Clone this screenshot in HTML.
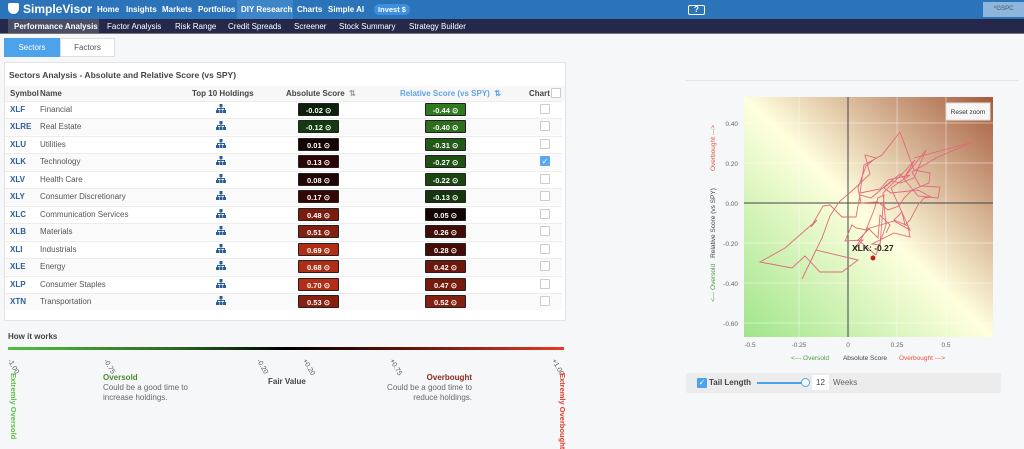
<!DOCTYPE html>
<html><head><meta charset="utf-8"><style>
*{box-sizing:border-box;margin:0;padding:0}
body{width:1024px;height:431px;overflow:hidden;background:#f6f7f9;font-family:"Liberation Sans",sans-serif;font-size:8px;color:#444;position:relative}
.top{position:absolute;left:0;top:0;width:1024px;height:19px;background:#2b74ba}
.top .logo{position:absolute;left:8px;top:2px;color:#fff;font-size:12px;font-weight:bold}
.top .nav{position:absolute;top:5px;color:#fff;font-weight:bold;font-size:8px}
.sub{position:absolute;left:0;top:19px;width:1024px;height:15px;background:#25284a;border-bottom:1px solid #777}
.sub span{position:absolute;top:3px;color:#fff;font-size:8px}
.abs{position:absolute}
.card{position:absolute;left:4px;top:62px;width:562px;height:259px;background:#fff;border:1px solid #e3e3e3}
.row{position:absolute;left:5px;width:557px;height:17px;border-top:1px solid #ececec}
.sym{position:absolute;left:10px;color:#2b5d9c;font-weight:bold}
.nm{position:absolute;left:40px;color:#555}
.box{position:absolute;width:41px;height:13px;color:#fff;font-weight:bold;font-size:7.5px;text-align:center;line-height:13px;border-radius:1px;border:1px solid #222}
.cb{position:absolute;left:540px;width:10px;height:10px;border:1px solid #ccc;background:#fff;border-radius:1px}
.ico{position:absolute;left:216px;width:10px;height:9px}
.rl{position:absolute;top:358px;font-size:7px;transform:rotate(60deg);transform-origin:left top;color:#555}
</style></head><body>
<div class="top">
 <div class="logo"><span style="display:inline-block;width:11px;height:11px;background:#fff;border-radius:2px 2px 6px 6px;vertical-align:-1px;margin-right:4px"></span>SimpleVisor</div>
 <div class="nav" style="left:97px">Home</div>
 <div class="nav" style="left:126px">Insights</div>
 <div class="nav" style="left:162px">Markets</div>
 <div class="nav" style="left:198px">Portfolios</div>
 <div class="abs" style="left:237px;top:0;width:56px;height:19px;background:#3f86c9"></div>
 <div class="nav" style="left:241px">DIY Research</div>
 <div class="nav" style="left:297px">Charts</div>
 <div class="nav" style="left:328px">Simple AI</div>
 <div class="abs" style="left:374px;top:4px;width:36px;height:11px;background:#3d8fe0;border-radius:6px;color:#fff;font-weight:bold;font-size:7.5px;text-align:center;line-height:11px">Invest $</div>
 <div class="abs" style="left:688px;top:5px;width:17px;height:10px;border:1.5px solid #fff;border-radius:2px;color:#fff;font-size:8px;line-height:8px;text-align:center;font-weight:bold">?</div>
 <div class="abs" style="left:983px;top:2px;width:41px;height:15px;background:#8eb6dc;color:#456;font-size:6px;text-align:center;line-height:15px">^GSPC</div>
</div>
<div class="sub">
 <div class="abs" style="left:8px;top:0;width:91px;height:14px;background:#4a4d66"></div>
 <span style="left:14px;font-weight:bold">Performance Analysis</span>
 <span style="left:107px">Factor Analysis</span>
 <span style="left:175px">Risk Range</span>
 <span style="left:228px">Credit Spreads</span>
 <span style="left:294px">Screener</span>
 <span style="left:339px">Stock Summary</span>
 <span style="left:409px">Strategy Builder</span>
</div>
<div class="abs" style="left:4px;top:38px;width:56px;height:19px;background:#4ca3ec;color:#fff;text-align:center;line-height:19px">Sectors</div>
<div class="abs" style="left:60px;top:38px;width:55px;height:19px;background:#fff;border:1px solid #ddd;text-align:center;line-height:17px;color:#555">Factors</div>
<div class="card">
 <div class="abs" style="left:4px;top:7px;font-weight:bold;font-size:8.5px;color:#444">Sectors Analysis - Absolute and Relative Score (vs SPY)</div>
</div>
<div class="abs" style="left:5px;top:86px;width:560px;height:15px;background:#f7f7f7"></div>
<div class="abs" style="left:10px;top:89px;font-weight:bold;color:#444">Symbol</div>
<div class="abs" style="left:40px;top:89px;font-weight:bold;color:#444">Name</div>
<div class="abs" style="left:192px;top:89px;font-weight:bold;color:#444">Top 10 Holdings</div>
<div class="abs" style="left:286px;top:89px;font-weight:bold;color:#444">Absolute Score &nbsp;<span style="color:#999">⇅</span></div>
<div class="abs" style="left:400px;top:89px;font-weight:bold;color:#5fa3e8">Relative Score (vs SPY) &nbsp;⇅</div>
<div class="abs" style="left:529px;top:89px;font-weight:bold;color:#444">Chart</div>
<div class="cb" style="left:551px;top:88px"></div>
<div id="rows"></div>
<div class="abs" style="left:8px;top:332px;font-weight:bold;color:#444">How it works</div>
<div class="abs" style="left:8px;top:347px;width:556px;height:3px;background:linear-gradient(90deg,#55c040,#2a6a20 30%,#000 50%,#5a1208 70%,#e53a25)"></div>
<div class="rl" style="left:12px">-1.00</div>
<div class="rl" style="left:108px">-0.75</div>
<div class="rl" style="left:261px">-0.20</div>
<div class="rl" style="left:307px">+0.20</div>
<div class="rl" style="left:394px">+0.75</div>
<div class="rl" style="left:556px">+1.00</div>
<div class="abs" style="left:18px;top:373px;font-size:7.5px;font-weight:bold;color:#55c040;transform:rotate(90deg);transform-origin:left top;white-space:nowrap">Extremly Oversold</div>
<div class="abs" style="left:567px;top:373px;font-size:7.5px;font-weight:bold;color:#e53a25;transform:rotate(90deg);transform-origin:left top;white-space:nowrap">Extremly Overbought</div>
<div class="abs" style="left:103px;top:373px;font-weight:bold;color:#4a8a30">Oversold</div>
<div class="abs" style="left:103px;top:383px;color:#666;line-height:10px">Could be a good time to<br>increase holdings.</div>
<div class="abs" style="left:268px;top:377px;font-weight:bold;color:#444">Fair Value</div>
<div class="abs" style="left:352px;top:373px;width:120px;text-align:right;font-weight:bold;color:#8a2a20">Overbought</div>
<div class="abs" style="left:352px;top:383px;width:120px;text-align:right;color:#666;line-height:10px">Could be a good time to<br>reduce holdings.</div>

<div class="abs" style="left:685px;top:80px;width:334px;height:1px;background:#e6e6e6"></div>
<svg class="abs" style="left:680px;top:80px" width="344" height="300">
 <defs><linearGradient id="g" x1="0" y1="1" x2="1" y2="0">
  <stop offset="0" stop-color="#9fe58a"/><stop offset="0.5" stop-color="#ffffde"/><stop offset="1" stop-color="#a55a3c"/></linearGradient></defs>
 <rect x="64" y="17" width="249" height="240" fill="url(#g)"/>
 <g stroke="#fff" stroke-opacity="0.6" stroke-width="0.7">
  <line x1="119" y1="17" x2="119" y2="257"/><line x1="217" y1="17" x2="217" y2="257"/><line x1="266" y1="17" x2="266" y2="257"/>
  <line x1="64" y1="43" x2="313" y2="43"/><line x1="64" y1="83" x2="313" y2="83"/><line x1="64" y1="163" x2="313" y2="163"/><line x1="64" y1="203" x2="313" y2="203"/><line x1="64" y1="243" x2="313" y2="243"/></g>
 <line x1="168" y1="17" x2="168" y2="257" stroke="#444" stroke-width="1"/>
 <line x1="64" y1="123" x2="313" y2="123" stroke="#444" stroke-width="1"/>
 <polyline fill="none" stroke="#e06a7c" stroke-width="0.9" points="206,153 210,145 200,135 198,158 188,148 174,170 183,160 165,161 172,145 176,148 186,150 194,130 198,118 204,115 200,165 192,164 214,153 230,157 228,146 214,140 222,132 225,145 230,140 238,125 244,118 251,117 238,110 211,113 204,108 212,101 220,103 234,98 246,70 224,98 235,80 223,93 203,113 206,145 196,175 178,160 190,148 214,141 230,150 211,108 230,95 208,100 200,109 180,113 184,85 202,75 220,52 234,90 250,93 249,103 232,110 224,118 219,126 208,130 198,122 181,123 178,108 186,86 196,78 185,75 190,94 173,110 159,122 150,136 142,158 122,199 136,170 178,180 162,192 140,192 125,176 112,188 80,182 105,168 137,140 131,147 143,126 150,125 162,137 176,137 180,115 191,118 204,107 220,94 238,116 258,118 260,107 240,106 232,92 258,77 293,62 256,72 234,78"/>
 <circle cx="193" cy="178" r="2.5" fill="#c0201a"/>
 <text x="172" y="171" font-size="8.5" font-weight="bold" fill="#222" font-family="Liberation Sans">XLK: -0.27</text>
 <rect x="266" y="23" width="44" height="17" fill="#f7f7f7" stroke="#ddd"/>
 <text x="288" y="34" font-size="6.5" text-anchor="middle" fill="#333" font-family="Liberation Sans">Reset zoom</text>
 <g font-size="6.5" fill="#666" font-family="Liberation Sans" text-anchor="end">
  <text x="58" y="46">0.40</text><text x="58" y="86">0.20</text><text x="58" y="126">0.00</text><text x="58" y="166">-0.20</text><text x="58" y="206">-0.40</text><text x="58" y="246">-0.60</text></g>
 <g font-size="6.5" fill="#666" font-family="Liberation Sans" text-anchor="middle">
  <text x="70" y="267">-0.5</text><text x="119" y="267">-0.25</text><text x="168" y="267">0</text><text x="217" y="267">0.25</text><text x="266" y="267">0.5</text></g>
 <g font-size="6.5" font-family="Liberation Sans" text-anchor="middle">
  <text x="130" y="280" fill="#4a9a40">&lt;--- Oversold</text><text x="185" y="280" fill="#444">Absolute Score</text><text x="242" y="280" fill="#e5553a">Overbought ---&gt;</text></g>
 <g font-size="6.5" font-family="Liberation Sans" text-anchor="middle">
  <text transform="translate(35,68) rotate(-90)" fill="#e5553a">Overbought ---&gt;</text>
  <text transform="translate(35,143) rotate(-90)" fill="#444">Relative Score (vs SPY)</text>
  <text transform="translate(35,203) rotate(-90)" fill="#4a9a40">&lt;--- Oversold</text></g>
</svg>
<div class="abs" style="left:686px;top:373px;width:315px;height:20px;background:#ececec;border-radius:2px"></div>
<div class="abs" style="left:697px;top:378px;width:10px;height:10px;background:#4ca3ec;border-radius:1px;color:#fff;font-size:8px;line-height:10px;text-align:center">✓</div>
<div class="abs" style="left:709px;top:378px;font-weight:bold;color:#444">Tail Length</div>
<div class="abs" style="left:757px;top:382px;width:48px;height:2px;background:#4ca3ec"></div>
<div class="abs" style="left:801px;top:378px;width:9px;height:9px;border-radius:50%;background:#fff;border:1px solid #4ca3ec"></div>
<div class="abs" style="left:812px;top:375px;width:17px;height:15px;background:#fff;text-align:center;line-height:15px;color:#444">12</div>
<div class="abs" style="left:833px;top:378px;color:#666">Weeks</div>
<script>
var d=[["XLF","Financial","-0.02","#0c200a","-0.44","#2f7a1f"],["XLRE","Real Estate","-0.12","#143a10","-0.40","#2c6e1c"],["XLU","Utilities","0.01","#150404","-0.31","#235a18"],["XLK","Technology","0.13","#2c0604","-0.27","#1f5115"],["XLV","Health Care","0.08","#210604","-0.22","#1b4612"],["XLY","Consumer Discretionary","0.17","#330804","-0.13","#14350e"],["XLC","Communication Services","0.48","#7a1c0e","0.05","#140404"],["XLB","Materials","0.51","#84200f","0.26","#420c06"],["XLI","Industrials","0.69","#b02e14","0.28","#460c06"],["XLE","Energy","0.68","#ae2d14","0.42","#6c180c"],["XLP","Consumer Staples","0.70","#b22e14","0.47","#771b0d"],["XTN","Transportation","0.53","#88200f","0.52","#83200f"]];
var h="";d.forEach(function(r,i){var y=101+i*17.45;h+='<div class="row" style="top:'+y+'px;'+(i%2?'background:#fafafa':'')+'"></div>';var t=y+4;
h+='<div class="abs sym" style="top:'+t+'px">'+r[0]+'</div><div class="abs nm" style="top:'+t+'px">'+r[1]+'</div>';
h+='<svg class="ico" style="top:'+(y+3)+'px" viewBox="0 0 10 9"><rect x="3.5" y="0" width="3" height="3" fill="#2b5d9c"/><rect x="0" y="6" width="3" height="3" fill="#2b5d9c"/><rect x="3.5" y="6" width="3" height="3" fill="#2b5d9c"/><rect x="7" y="6" width="3" height="3" fill="#2b5d9c"/><path d="M5 3V6M1.5 6V4.5H8.5V6" stroke="#2b5d9c" fill="none"/></svg>';
h+='<div class="box" style="left:298px;top:'+(y+2)+'px;background:'+r[3]+'">'+r[2]+' ⊙</div>';
h+='<div class="box" style="left:425px;top:'+(y+2)+'px;background:'+r[5]+'">'+r[4]+' ⊙</div>';
h+='<div class="cb" style="top:'+(y+3)+'px;'+(i==3?'background:#5aa9ef;border-color:#5aa9ef;color:#fff;font-size:8px;line-height:9px;text-align:center':'')+'">'+(i==3?'✓':'')+'</div>';});
document.getElementById("rows").innerHTML=h;
</script>
</body></html>
